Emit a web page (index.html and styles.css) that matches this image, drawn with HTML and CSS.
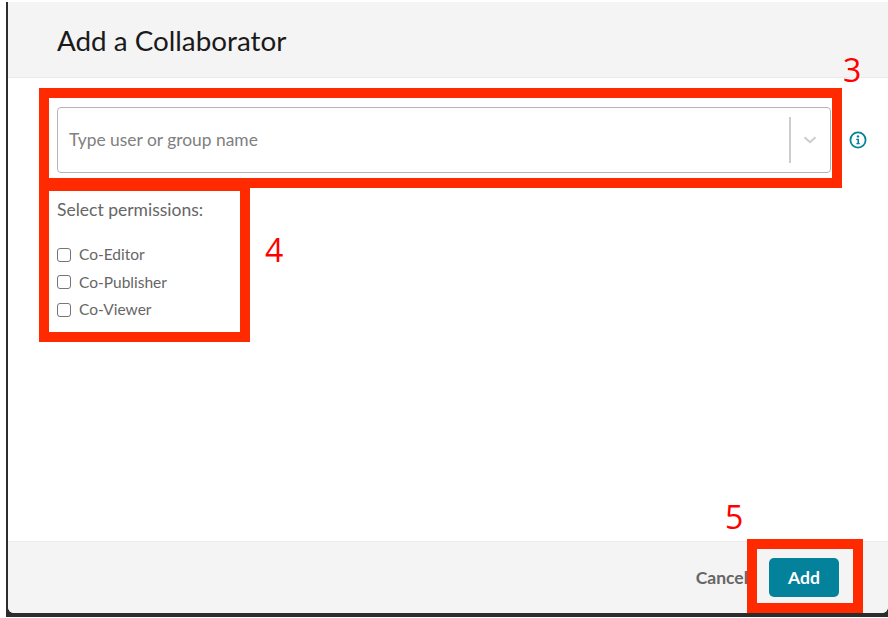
FILE: index.html
```html
<!DOCTYPE html>
<html lang="en">
<head>
<meta charset="utf-8"/>
<meta name="viewport" content="width=device-width, initial-scale=1.0"/>
<title>Add a Collaborator</title>
<link rel="stylesheet" href="styles.css">
</head>
<body>
  <div class="backdrop">
    <div class="dialog">
      <div class="dialog-header">
        <h1>Add a Collaborator</h1>
      </div>
      <div class="dialog-body">
        <div class="picker-row">
          <div class="picker">
            <span class="picker-placeholder">Type user or group name</span>
            <span class="picker-divider"></span>
            <svg class="picker-arrow" width="14" height="8" viewBox="0 0 14 8"><path d="M1.5 1.2 7 6.2l5.5-5" fill="none" stroke="#ccc" stroke-width="2"/></svg>
          </div>
          <svg class="info-icon" width="18" height="18" viewBox="0 0 18 18">
            <circle cx="9" cy="9" r="7.6" fill="none" stroke="#04829b" stroke-width="1.8"/>
            <circle cx="9" cy="5.4" r="1.2" fill="#04829b"/>
            <path d="M7.2 7.8H10v4.4h1v1.1H7.2v-1.1h1.2V8.9H7.2z" fill="#04829b"/>
          </svg>
        </div>
        <p class="perm-title">Select permissions:</p>
        <ul class="perm-list">
          <li><label><input type="checkbox"> Co-Editor</label></li>
          <li><label><input type="checkbox"> Co-Publisher</label></li>
          <li><label><input type="checkbox"> Co-Viewer</label></li>
        </ul>
      </div>
      <div class="dialog-footer">
        <button class="btn-cancel">Cancel</button>
        <button class="btn-add">Add</button>
      </div>
    </div>
  </div>

  <div class="callout callout-picker"></div>
  <div class="callout callout-perms"></div>
  <div class="callout callout-add"></div>
  <span class="step step-3">3</span>
  <span class="step step-4">4</span>
  <span class="step step-5">5</span>
</body>
</html>
```

FILE: styles.css
```css
html, body {
  margin: 0;
  height: 618px;
  overflow: hidden;
  background: #fff;
  font-family: Lato, "Liberation Sans", sans-serif;
}
.backdrop {
  margin: 2px 0 0 6px;
  height: 615px;
  box-sizing: border-box;
  padding: 0 0 4px 2px;
  background: #2c2c2c;
}
.dialog {
  display: flex;
  flex-direction: column;
  height: 100%;
  background: #fff;
  border-radius: 0 0 6px 6px;
  overflow: hidden;
}
.dialog-header {
  flex: none;
  height: 76px;
  box-sizing: border-box;
  padding: 2px 49px 0;
  display: flex;
  align-items: center;
  background: #f4f4f4;
  border-bottom: 1px solid #ebebeb;
}
h1 {
  margin: 0;
  font-size: 27.8px;
  font-weight: 400;
  color: #1a1a1a;
}
.dialog-body {
  flex: 1;
  padding: 29px 0 0 49px;
}
.picker-row {
  display: flex;
  align-items: center;
}
.picker {
  width: 774px;
  height: 66px;
  box-sizing: border-box;
  display: flex;
  align-items: center;
  padding: 0 13px 0 11px;
  border: 1px solid #b5b5b5;
  border-radius: 4px;
}
.picker-placeholder {
  flex: 1;
  margin-top: -2px;
  font-size: 17.4px;
  color: #808080;
}
.picker-divider {
  width: 2px;
  height: 46px;
  background: #ccc;
  margin-right: 12px;
}
.info-icon {
  margin-left: 18px;
}
.perm-title {
  margin: 27px 0 0;
  font-size: 17.5px;
  line-height: 20px;
  color: #666;
}
.perm-list {
  list-style: none;
  margin: 21px 0 0;
  padding: 0;
}
.perm-list li {
  height: 27.5px;
  font-size: 15.5px;
  line-height: 27.5px;
  color: #666;
}
.perm-list label {
  display: flex;
  align-items: center;
}
.perm-list input {
  appearance: none;
  width: 14px;
  height: 14px;
  margin: 0 8px 0 0;
  border: 1px solid #767676;
  border-radius: 3px;
  background: #fff;
}
.dialog-footer {
  flex: none;
  height: 72px;
  box-sizing: border-box;
  display: flex;
  align-items: center;
  justify-content: flex-end;
  padding: 0 49px 0 0;
  background: #f4f4f4;
  border-top: 1px solid #ebebeb;
}
.btn-cancel {
  border: none;
  background: none;
  padding: 0;
  margin-right: 21px;
  font: 700 17.5px Lato, "Liberation Sans", sans-serif;
  color: #666;
}
.btn-add {
  width: 70px;
  height: 39px;
  border: none;
  border-radius: 5px;
  padding: 0;
  background: #04829b;
  color: #fff;
  font: 700 17.5px Lato, "Liberation Sans", sans-serif;
}
/* annotations drawn over the screenshot */
.callout {
  position: absolute;
  box-sizing: border-box;
  border: 10px solid #ff2a00;
}
.callout-picker {
  left: 39px;
  top: 88px;
  width: 803px;
  height: 100px;
}
.callout-perms {
  left: 39px;
  top: 188px;
  width: 211px;
  height: 154px;
  border-top-width: 3px;
}
.callout-add {
  left: 747px;
  top: 539px;
  width: 116px;
  height: 74px;
}
.step {
  position: absolute;
  font-family: "Open Sans", sans-serif;
  font-size: 32px;
  line-height: 40px;
  color: #ff0000;
}
.step-3 {
  left: 843px;
  top: 50px;
}
.step-4 {
  left: 265px;
  top: 230px;
}
.step-5 {
  left: 725px;
  top: 497px;
}
```
